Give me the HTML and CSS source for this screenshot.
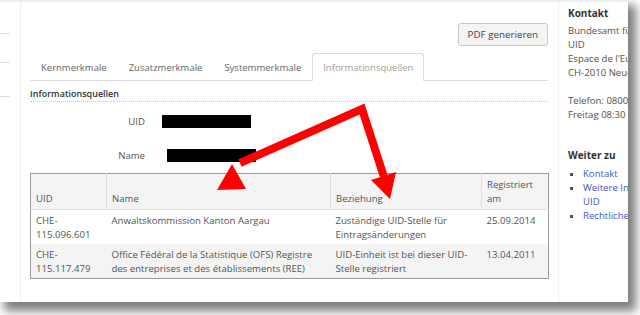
FILE: index.html
```html
<!DOCTYPE html>
<html lang="de">
<head>
<meta charset="utf-8">
<title>Informationsquellen</title>
<link rel="stylesheet" href="styles.css">
</head>
<body>
<div class="screen">
  <div class="leftnav">
    <div class="ln"></div>
    <div class="ln ln2"></div>
    <div class="ln ln3"></div>
  </div>
  <div class="main">
    <div class="toolbar"><button class="btn">PDF generieren</button></div>
    <ul class="tabs">
      <li class="tab">Kernmerkmale</li>
      <li class="tab">Zusatzmerkmale</li>
      <li class="tab">Systemmerkmale</li>
      <li class="tab active">Informationsquellen</li>
    </ul>
    <h3 class="section">Informationsquellen</h3>
    <div class="fields">
      <div class="label">UID</div>
      <div class="value"><span class="redact"></span></div>
      <div class="label">Name</div>
      <div class="value"><span class="redact redact-name"></span></div>
    </div>
    <table class="sources">
      <colgroup><col class="c1"><col class="c2"><col class="c3"><col class="c4"></colgroup>
      <thead>
        <tr><th>UID</th><th>Name</th><th>Beziehung</th><th>Registriert am</th></tr>
      </thead>
      <tbody>
        <tr><td>CHE-115.096.601</td><td>Anwaltskommission Kanton Aargau</td><td>Zuständige UID-Stelle für Eintragsänderungen</td><td>25.09.2014</td></tr>
        <tr class="alt"><td>CHE-115.117.479</td><td>Office Fédéral de la Statistique (OFS) Registre des entreprises et des établissements (REE)</td><td>UID-Einheit ist bei dieser UID-Stelle registriert</td><td>13.04.2011</td></tr>
      </tbody>
    </table>
  </div>
  <aside class="side">
    <h4 class="side-title">Kontakt</h4>
    <p class="side-text">Bundesamt für Statistik<br>UID<br>Espace de l'Europe 10<br>CH-2010 Neuchâtel</p>
    <p class="side-text">Telefon: 0800 00 00 00<br>Freitag 08:30 - 12:00</p>
    <h4 class="side-title weiter">Weiter zu</h4>
    <ul class="links">
      <li><a href="#">Kontakt</a></li>
      <li><a href="#">Weitere Informationen zur<br>UID</a></li>
      <li><a href="#">Rechtliches</a></li>
    </ul>
  </aside>
  <svg class="arrows" width="628" height="302" viewBox="0 0 628 302">
    <polyline points="240,163 362,109 384,177" fill="none" stroke="#f00" stroke-width="8" stroke-linejoin="miter"/>
    <polygon points="217,190 232,164 246,189" fill="#f00"/>
    <polygon points="390,199 371,180 396,172" fill="#f00"/>
  </svg>
</div>
</body>
</html>
```

FILE: styles.css
```css
* { box-sizing: border-box; }
html, body { margin: 0; padding: 0; }
body {
  width: 640px;
  height: 315px;
  background: #ffffff;
  overflow: hidden;
  font-family: "Open Sans", "DejaVu Sans", sans-serif;
  font-size: 9.6px;
  color: #555;
}
.screen {
  position: relative;
  width: 628px;
  height: 302px;
  background: #fff;
  display: flex;
  overflow: hidden;
  border-top: 2px solid #f0f0f0;
  box-shadow: 6px 7px 9px 2px rgba(0,0,0,0.5);
}
.leftnav {
  width: 21px;
  flex: none;
  border-right: 1px solid #eeeeee;
  padding-top: 31px;
}
.ln { width: 10px; border-top: 1px solid #dcdcdc; }
.ln2 { margin-top: 28px; }
.ln3 { margin-top: 33px; }

.main {
  width: 536px;
  flex: none;
  padding-left: 9px;
  padding-right: 9px;
}
.toolbar {
  display: flex;
  justify-content: flex-end;
  padding-top: 21px;
}
.btn {
  height: 23px;
  padding: 0 9px;
  font-family: inherit;
  font-size: 9.8px;
  color: #444;
  background: #f4f4f4;
  border: 1px solid #c8c8c8;
  border-radius: 3px;
}
.tabs {
  list-style: none;
  margin: 7px 0 0;
  padding: 0;
  display: flex;
  border-bottom: 1px solid #dddddd;
  height: 28px;
}
.tab {
  padding: 0 10px;
  line-height: 27px;
  font-size: 9.5px;
  color: #666;
  border: 1px solid transparent;
  border-bottom: none;
}
.tab.active {
  color: #a0a0a0;
  background: #fff;
  border-color: #dddddd;
  border-radius: 3px 3px 0 0;
  height: 28px;
}
.section {
  margin: 0;
  padding-top: 6px;
  line-height: 14px;
  font-size: 9px;
  font-weight: 600;
  color: #333;
  border-bottom: 1px dotted #c8c8c8;
}
.fields {
  display: grid;
  grid-template-columns: 115px 1fr;
  grid-auto-rows: 34px;
  column-gap: 17px;
  align-items: center;
  margin-top: 2px;
}
.label { text-align: right; font-size: 9.6px; color: #555; }
.redact {
  display: block;
  width: 89px;
  height: 13px;
  background: #000;
}
.redact-name { margin-left: 5px; }

.sources {
  margin-top: 1px;
  width: 518px;
  table-layout: fixed;
  border-collapse: collapse;
  border: 1px solid #9a9a9a;
  font-size: 9.6px;
  line-height: 14px;
}
.c1 { width: 76px; }
.c2 { width: 224px; }
.c3 { width: 151px; }
.c4 { width: 67px; }
.sources th {
  background: #f4f4f4;
  font-weight: normal;
  text-align: left;
  vertical-align: bottom;
  padding: 4px 5px 3px;
  color: #555;
  border-left: 1px solid #dedede;
  border-bottom: 1px solid #dedede;
}
.sources th:first-child { border-left: none; }
.sources td {
  vertical-align: top;
  padding: 4px 5px 2px;
  color: #555;
}
.sources tr.alt td { background: #f4f4f4; }

.side {
  flex: none;
  width: 70px;
  border-left: 1px solid #f0f0f0;
  margin-left: 1px;
  padding-left: 9px;
  white-space: nowrap;
  color: #5a5047;
  font-size: 9.6px;
  line-height: 14px;
}
.side-title {
  margin: 0;
  padding-top: 4px;
  font-size: 10px;
  font-weight: 700;
  color: #333;
}
.side-text { margin: 4px 0 0; }
.side-text + .side-text { margin-top: 14px; }
.weiter { margin-top: 22px; }
.links {
  list-style: square;
  margin: 5px 0 0;
  padding-left: 15px;
}
.links a { color: #4355c8; text-decoration: none; }

.arrows {
  position: absolute;
  left: 0;
  top: -2px;
  pointer-events: none;
}
```
